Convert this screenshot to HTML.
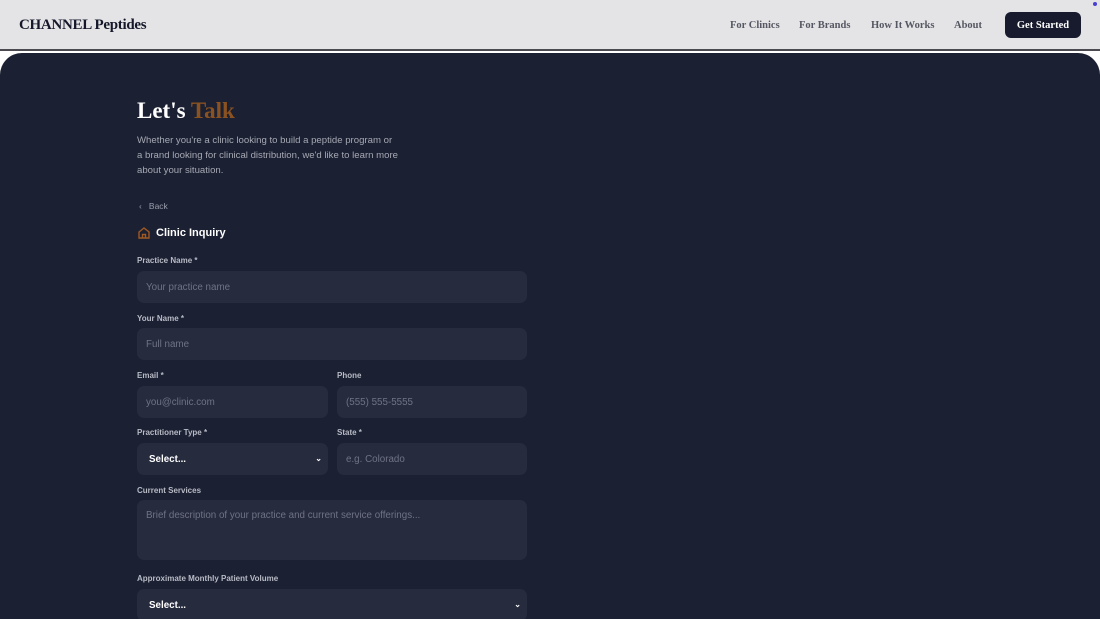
<!DOCTYPE html>
<html><head><style>
*{box-sizing:border-box;margin:0;padding:0}
html,body{width:1100px;height:619px;overflow:hidden}
body{position:relative;background:#fff;font-family:"Liberation Sans",sans-serif}
.hdr{position:absolute;left:0;top:0;width:1100px;height:51px;background:#e4e3e6;border-bottom:2px solid #4a4a50}
.logo{position:absolute;left:19px;top:17px;font-family:"Liberation Serif",serif;font-weight:bold;font-size:15px;color:#15182a;letter-spacing:-0.3px}
.nav a{position:absolute;top:20px;font-family:"Liberation Serif",serif;font-size:10.5px;font-weight:bold;color:#555862;text-decoration:none}
.btn{position:absolute;left:1005px;top:12px;width:76px;height:26px;background:#171b2d;border-radius:6px;color:#fff;font-family:"Liberation Serif",serif;font-weight:bold;font-size:10.5px;text-align:center;line-height:27px}
.dot{position:absolute;left:1093px;top:2px;width:4px;height:4px;border-radius:50%;background:#4a3fd0}
.panel{position:absolute;left:0;top:53px;width:1100px;height:566px;background:#1b2032;border-radius:22px 22px 0 0}
h1{position:absolute;left:137px;top:98px;font-family:"Liberation Serif",serif;font-size:23px;color:#fff;font-weight:bold}
h1 span{color:#8a5220}
.sub{position:absolute;left:137px;top:133px;width:270px;font-size:9.6px;line-height:15px;color:#a6a9b4}
.back{position:absolute;left:139px;top:201px;font-size:8.5px;color:#9a9dab}
.ci{position:absolute;left:156px;top:227px;font-size:11px;font-weight:bold;color:#fff}
.lbl{position:absolute;font-size:8px;font-weight:bold;color:#b8bbc6}
.in{position:absolute;height:32px;background:#262b3e;border-radius:7px;font-size:9.8px;color:#6f7384;padding:1px 9px 0;line-height:32px}
.sel{color:#fff;font-weight:bold;padding-left:12px}
.chev{position:absolute;right:6px;top:0;color:#fff;font-size:8px}
</style></head><body>
<div class="hdr">
<div class="logo">CHANNEL Peptides</div>
<div class="nav"><a style="left:730px">For Clinics</a><a style="left:799px">For Brands</a><a style="left:871px">How It Works</a><a style="left:954px">About</a></div>
<div class="btn">Get Started</div>
<div class="dot"></div>
</div>
<div class="panel"></div>
<h1>Let's <span>Talk</span></h1>
<div class="sub">Whether you're a clinic looking to build a peptide program or<br>a brand looking for clinical distribution, we'd like to learn more<br>about your situation.</div>
<div class="back">‹&nbsp;&nbsp; Back</div>
<svg style="position:absolute;left:137px;top:226px" width="14" height="14" viewBox="0 0 14 14" fill="none" stroke="#a05a22" stroke-width="1.4"><path d="M2 6L7 2l5 4v6H2z"/><path d="M5.5 12V8.5h3V12"/></svg>
<div class="ci">Clinic Inquiry</div>
<div class="lbl" style="left:137px;top:256px">Practice Name *</div>
<div class="in" style="left:137px;top:271px;width:390px">Your practice name</div>
<div class="lbl" style="left:137px;top:314px">Your Name *</div>
<div class="in" style="left:137px;top:328px;width:390px">Full name</div>
<div class="lbl" style="left:137px;top:371px">Email *</div>
<div class="in" style="left:137px;top:386px;width:191px">you@clinic.com</div>
<div class="lbl" style="left:337px;top:371px">Phone</div>
<div class="in" style="left:337px;top:386px;width:190px">(555) 555-5555</div>
<div class="lbl" style="left:137px;top:428px">Practitioner Type *</div>
<div class="in sel" style="left:137px;top:443px;width:191px">Select...<span class="chev">⌄</span></div>
<div class="lbl" style="left:337px;top:428px">State *</div>
<div class="in" style="left:337px;top:443px;width:190px">e.g. Colorado</div>
<div class="lbl" style="left:137px;top:486px">Current Services</div>
<div class="in" style="left:137px;top:500px;width:390px;height:60px;line-height:1;padding-top:11px">Brief description of your practice and current service offerings...</div>
<div class="lbl" style="left:137px;top:574px">Approximate Monthly Patient Volume</div>
<div class="in sel" style="left:137px;top:589px;width:390px">Select...<span class="chev">⌄</span></div>
</body></html>
